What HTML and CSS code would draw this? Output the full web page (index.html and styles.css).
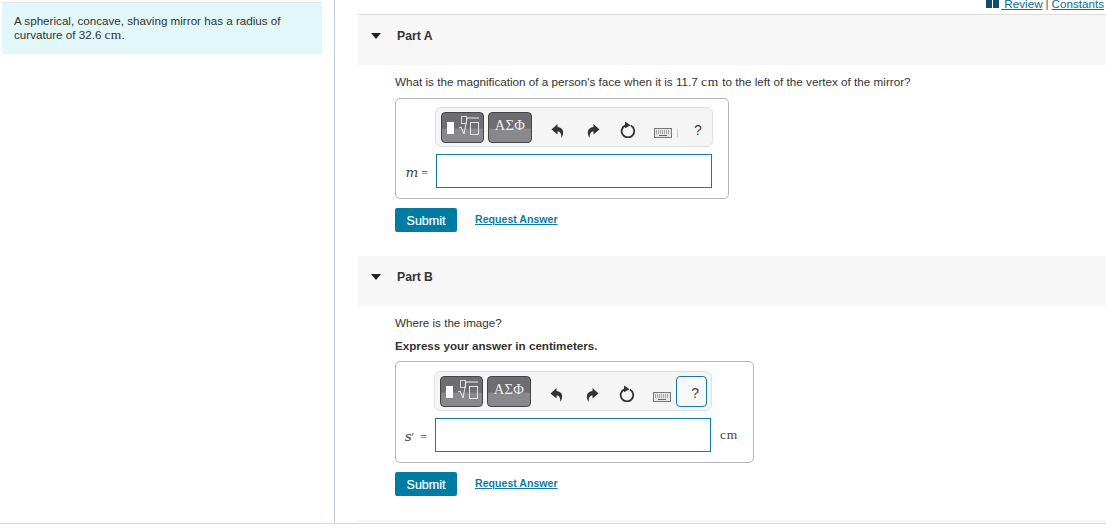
FILE: index.html
```html
<!DOCTYPE html>
<html lang="en">
<head>
<meta charset="utf-8">
<title>Spherical mirror</title>
<link rel="stylesheet" href="styles.css">
</head>
<body>
<div class="page">
  <aside class="side">
    <div class="intro">A spherical, concave, shaving mirror has a radius of curvature of 32.6 <span class="unit tight">cm</span>.</div>
  </aside>
  <main class="main">
    <div class="topbar">
      <svg class="book" width="13" height="8" viewBox="0 0 13 8"><rect x="0" y="0" width="6" height="8" fill="#0f4f6b"/><rect x="7" y="0" width="6" height="8" fill="#0f4f6b"/></svg>
      <a class="toplink first">&nbsp;Review</a><span class="pipe">|</span><a class="toplink">Constants</a>
    </div>

    <section class="part">
      <header class="part-head"><span class="tri"></span><span class="part-name">Part A</span></header>
      <div class="part-body">
        <p class="q qa">What is the magnification of a person's face when it is 11.7 <span class="unit">cm</span> to the left of the vertex of the mirror?</p>
        <div class="box box-a">
          <div class="toolbar">
            <span class="btn btn1"><svg width="41" height="29" viewBox="0 0 41 29"><rect x="5" y="9" width="7" height="12" fill="#fff"/><rect x="19.500" y="3.500" width="5" height="7" fill="none" stroke="#d4d4d4"/><path d="M17 15l2-1 3 7 3-16h12" fill="none" stroke="#eee" stroke-width="1"/><rect x="28.500" y="9.500" width="8" height="12" fill="none" stroke="#e4e4e4"/></svg></span>
            <span class="btn btn2">ΑΣΦ</span>
            <svg class="ic i-undo" width="14" height="16" viewBox="0 0 14 16"><path d="M6.500 1L.5 6.500l6 5V8.500c2.500 0 3.800 1.500 4 6.500 2.500-4.500 3-10-4-11z" fill="#333"/></svg>
            <svg class="ic i-redo" width="14" height="16" viewBox="0 0 14 16"><path d="M7.500 1l6 5.500-6 5V8.500c-2.500 0-3.800 1.500-4 6.500-2.500-4.500-3-10 4-11z" fill="#333"/></svg>
            <svg class="ic i-reset" width="16" height="17" viewBox="0 0 16 17"><path d="M10.800 4.500a6.300 6.300 0 1 1-5.300-.2" fill="none" stroke="#333" stroke-width="1.800"/><path d="M5 .5l5.500 3.800-5.500 3z" fill="#333"/></svg>
            <svg class="ic i-kbd" width="18" height="10" viewBox="0 0 18 10"><rect x=".5" y=".5" width="17" height="9" fill="#e6e6e6" stroke="#777"/><path d="M2 3h14M2 5h14" stroke="#666" stroke-dasharray="1 1"/><path d="M5 7.500h8" stroke="#666"/></svg>
            <span class="sep"></span>
            <span class="help">?</span>
          </div>
          <span class="label"><i class="var">m</i> =</span>
          <div class="input"></div>
        </div>
        <div class="actions"><a class="submit">Submit</a><a class="req">Request Answer</a></div>
      </div>
    </section>

    <section class="part">
      <header class="part-head"><span class="tri"></span><span class="part-name">Part B</span></header>
      <div class="part-body">
        <p class="q qb">Where is the image?</p>
        <p class="q strong">Express your answer in centimeters.</p>
        <div class="box box-b">
          <div class="toolbar">
            <span class="btn btn1"><svg width="41" height="29" viewBox="0 0 41 29"><rect x="5" y="9" width="7" height="12" fill="#fff"/><rect x="19.500" y="3.500" width="5" height="7" fill="none" stroke="#d4d4d4"/><path d="M17 15l2-1 3 7 3-16h12" fill="none" stroke="#eee" stroke-width="1"/><rect x="28.500" y="9.500" width="8" height="12" fill="none" stroke="#e4e4e4"/></svg></span>
            <span class="btn btn2">ΑΣΦ</span>
            <svg class="ic i-undo" width="14" height="16" viewBox="0 0 14 16"><path d="M6.500 1L.5 6.500l6 5V8.500c2.500 0 3.800 1.500 4 6.500 2.500-4.500 3-10-4-11z" fill="#333"/></svg>
            <svg class="ic i-redo" width="14" height="16" viewBox="0 0 14 16"><path d="M7.500 1l6 5.500-6 5V8.500c-2.500 0-3.800 1.500-4 6.500-2.500-4.500-3-10 4-11z" fill="#333"/></svg>
            <svg class="ic i-reset" width="16" height="17" viewBox="0 0 16 17"><path d="M10.800 4.500a6.300 6.300 0 1 1-5.300-.2" fill="none" stroke="#333" stroke-width="1.800"/><path d="M5 .5l5.500 3.800-5.500 3z" fill="#333"/></svg>
            <svg class="ic i-kbd" width="18" height="10" viewBox="0 0 18 10"><rect x=".5" y=".5" width="17" height="9" fill="#e6e6e6" stroke="#777"/><path d="M2 3h14M2 5h14" stroke="#666" stroke-dasharray="1 1"/><path d="M5 7.500h8" stroke="#666"/></svg>
            <span class="help focus">?</span>
          </div>
          <span class="label"><i class="var">s</i>′ &nbsp;=</span>
          <div class="input"></div>
          <span class="label-unit unit">cm</span>
        </div>
        <div class="actions"><a class="submit">Submit</a><a class="req">Request Answer</a></div>
      </div>
    </section>
    <div class="next"></div>
  </main>
</div>
</body>
</html>
```
FILE: styles.css
```css
* { box-sizing: border-box; }
html, body { margin: 0; padding: 0; background: #fff; }
body { font-family: "Liberation Sans", Arial, sans-serif; font-size: 11.65px; color: #333; overflow: hidden; }
.page { display: flex; height: 524px; width: 1106px; border-bottom: 1px solid #d9dcdf; }
.side { width: 335px; flex: none; border-right: 1px solid #bccfe2; padding: 2px 12px 0 2px; }
.intro { background: #e1f7fa; border-top: 1px solid #dfe5ea; height: 52px; padding: 11px 12px 0; line-height: 14px; color: #333; }
.unit { font-family: "Liberation Serif", serif; font-size: 13.5px; letter-spacing: .7px; line-height: 1; }
.unit.tight { letter-spacing: .2px; }
.main { flex: 1; min-width: 0; padding-left: 23px; display: flex; flex-direction: column; overflow: hidden; }
.topbar { height: 15px; flex: none; border-bottom: 1px solid #dcdcdc; display: flex; align-items: flex-end; justify-content: flex-end; padding: 0 2px 3px 0; font-size: 11.65px; line-height: 14px; color: #555; }
.book { margin-right: 2px; margin-bottom: 3px; }
.toplink { color: #0d6c8e; text-decoration: underline; }
.pipe { margin: 0 3px; }
.part-head { height: 50px; background: #f7f7f7; display: flex; align-items: center; padding: 0 0 9px 13px; }
.tri { width: 0; height: 0; border-left: 5px solid transparent; border-right: 5px solid transparent; border-top: 6px solid #222; margin-right: 16px; }
.part-name { font-weight: 700; font-size: 12.2px; color: #333; }
.part-body { padding: 0 0 24px 37px; }
.q { margin: 0; line-height: 14px; color: #333; }
.qa { padding-top: 10px; margin-bottom: 9px; font-size: 11.7px; }
.qb { padding-top: 10px; margin-bottom: 9px; }
.strong { font-weight: 700; margin-bottom: 8px; }
.box { border: 1px solid #b5b5b5; border-radius: 5px; display: grid; padding-top: 8px; height: 101px; align-content: start; }
.box-a { width: 334px; grid-template-columns: 40px 278px; }
.box-b { width: 359px; height: 102px; padding-top: 9px; grid-template-columns: 39px 278px 40px; }
.toolbar { grid-column: 2 / 3; height: 40px; width: 278px; background: #f5f5f5; border: 1px solid #e0e0e0; border-radius: 6px; display: flex; align-items: center; padding-left: 5px; margin-bottom: 7px; margin-left: -1px; }
.btn { height: 31px; border-radius: 4px; border: 1px solid #454545; background: linear-gradient(#6e6d71 0, #6e6d71 52%, #89888c 56%, #89888c 100%); color: #eee; display: flex; justify-content: center; flex: none; }
.btn1 { width: 43px; margin-right: 4px; }
.btn2 { width: 44px; font-family: "Liberation Serif", serif; font-size: 14.5px; letter-spacing: .4px; line-height: 24px; }
.ic { flex: none; }
.i-undo { margin-left: 19px; margin-top: 7px; }
.i-redo { margin-left: 21px; margin-top: 7px; }
.i-reset { margin-left: 20px; margin-top: 5px; }
.i-kbd { margin-left: 18px; margin-top: 12px; }
.sep { width: 1px; height: 8px; background: #ccc; margin: 12px 0 0 5px; }
.help { font-size: 14px; color: #444; margin: 6px 0 0 16px; }
.help.focus { width: 31px; height: 31px; margin: 0 0 0 5px; border: 1px solid #0d7ea0; border-radius: 4px; display: flex; align-items: center; justify-content: flex-end; padding: 3px 7px 0 0; background: #f8f8f8; }
.label { grid-column: 1; font-family: "Liberation Serif", serif; font-size: 12px; color: #444; text-align: right; padding: 2px 8px 0 0; align-self: center; }
.var { font-family: "DejaVu Serif", serif; font-size: 13.5px; font-weight: 400; }
.input { grid-column: 2; height: 34px; width: 276px; border: 1px solid #0d7ea0; background: #fff; }
.label-unit { grid-column: 3; color: #444; align-self: center; padding-left: 7px; }
.actions { display: flex; align-items: center; margin-top: 9px; height: 24px; }
.submit { width: 62px; height: 24px; padding-top: 1px; background: #007ca3; color: #fff; border-radius: 2px; font-size: 12.5px; font-weight: 400; display: flex; align-items: center; justify-content: center; -webkit-text-stroke: .2px #fff; }
.req { margin-left: 18px; color: #0d7ea0; font-weight: 700; font-size: 10.6px; text-decoration: underline; margin-top: -2px; }
.next { flex: 1; background: #f7f7f7; }
```
